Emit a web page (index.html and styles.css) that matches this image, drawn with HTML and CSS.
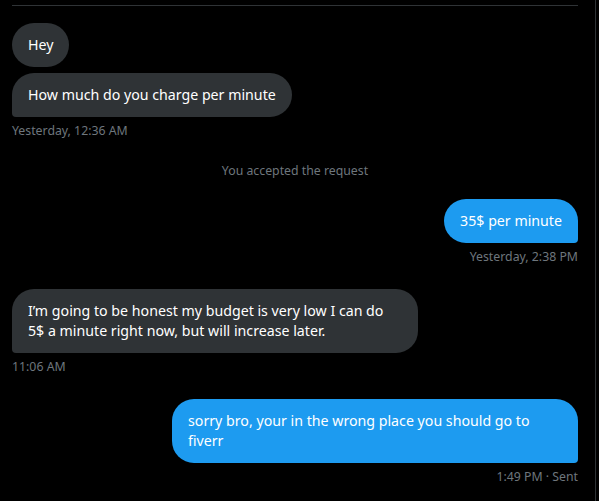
FILE: index.html
```html
<!DOCTYPE html>
<html lang="en">
<head>
<meta charset="utf-8">
<title>Messages</title>
<link rel="stylesheet" href="styles.css">
</head>
<body>
<div class="pane">
  <div class="chat">
    <div class="group in">
      <div class="bubble first">Hey</div>
      <div class="bubble last">How much do you charge per minute</div>
      <div class="meta">Yesterday, 12:36 AM</div>
    </div>
    <div class="system">You accepted the request</div>
    <div class="group out">
      <div class="bubble last">35$ per minute</div>
      <div class="meta">Yesterday, 2:38 PM</div>
    </div>
    <div class="group in">
      <div class="bubble last">I’m going to be honest my budget is very low I can do 5$ a minute right now, but will increase later.</div>
      <div class="meta">11:06 AM</div>
    </div>
    <div class="group out">
      <div class="bubble last">sorry bro, your in the wrong place you should go to fiverr</div>
      <div class="meta">1:49 PM · Sent</div>
    </div>
  </div>
</div>
</body>
</html>
```

FILE: styles.css
```css
html, body {
  margin: 0;
  padding: 0;
  background: #000;
  height: 100%;
}
body {
  font-family: "Noto Sans", "Open Sans", sans-serif;
  color: #fff;
  overflow: hidden;
}
.pane {
  box-sizing: border-box;
  width: 596px;
  height: 100%;
  border-right: 1px solid #2f3336;
  padding: 5px 17px 0 12px;
}
.chat {
  border-top: 1px solid #2f3336;
  padding-top: 17px;
  display: flex;
  flex-direction: column;
}
.group {
  display: flex;
  flex-direction: column;
  gap: 6px;
}
.group.in { align-items: flex-start; }
.group.out { align-items: flex-end; }
.bubble {
  box-sizing: border-box;
  max-width: 406px;
  padding: 12px 16px;
  font-size: 14.2px;
  line-height: 20px;
  border-radius: 22px;
  background: #2f3336;
}
.out .bubble { background: #1d9bf0; }
.in .bubble.last { border-bottom-left-radius: 4px; }
.out .bubble.last { border-bottom-right-radius: 4px; }
.meta {
  font-size: 12.3px;
  line-height: 16px;
  color: #6e767d;
}
.system {
  text-align: center;
  font-size: 12.3px;
  line-height: 16px;
  color: #6e767d;
  margin: 24px 0 20px;
}
.group + .group { margin-top: 24px; }
```
